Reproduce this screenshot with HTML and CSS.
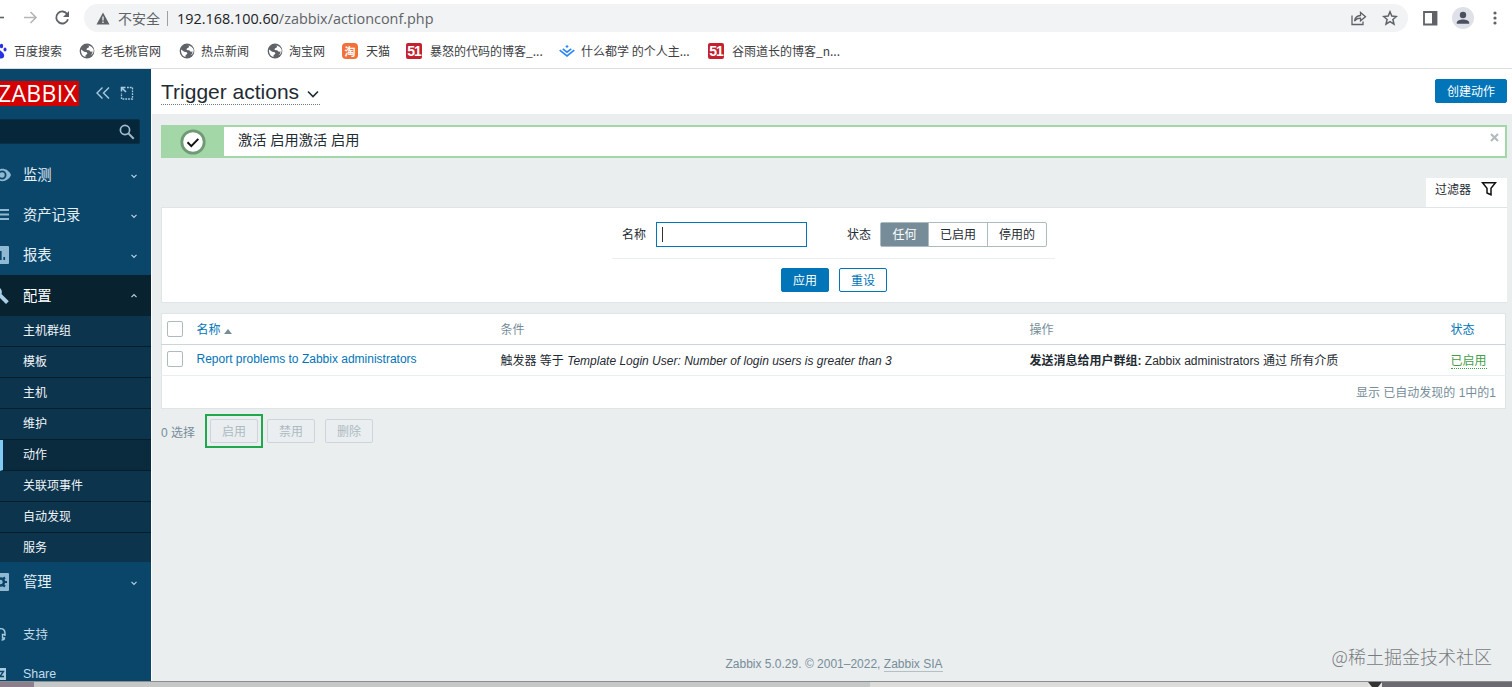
FILE: index.html
```html
<!DOCTYPE html>
<html lang="zh-CN">
<head>
  <meta charset="UTF-8">
  <title>Trigger actions</title>
  <link rel="stylesheet" href="styles.css">
</head>
<body>
  <svg class="defs" width="0" height="0">
    <symbol id="globe" viewBox="0 0 16 16">
      <circle cx="8" cy="8" r="7.4" fill="#5f6368"/>
      <path d="M2 6.500l3.200 2.300 2.600.4.6 1.600-1.800 1.400-.2 1.800C4 13.400 2 11 2 8zM8 2.200l1.800.3 .2 1.700-2.200 1.300-.2 1.500 2.600.2 1.500 1.600 1.900-.2c-.2 1.500-.9 2.900-2 3.800 2-1 3.300-3 3.100-5.500C14 4.600 11.500 2.200 8 2.200z" fill="#fff"/>
    </symbol>
    <symbol id="down" viewBox="0 0 8 8">
      <path d="M1.500 2.800L4 5.300l2.500-2.500" fill="none" stroke="#b5d3e6" stroke-width="1.200"/>
    </symbol>
  </svg>

  <div class="toolbar">
    <svg class="nav" width="76" height="36" viewBox="0 0 76 36" fill="none" stroke-width="1.600">
      <path d="M0 17.500h4" stroke="#5f6368"/>
      <path d="M24 17.500h11.500M30.500 12l5.500 5.500-5.500 5.500" stroke="#b4b6b9"/>
      <path d="M67.300 14.200a6 6 0 1 0 .7 5" stroke="#5f6368" stroke-width="1.800"/>
      <path d="M69 11v6h-6z" fill="#5f6368"/>
    </svg>
    <div class="address">
      <svg width="14" height="13" viewBox="0 0 14 13"><path d="M7 .5L13.500 12.500H.5z" fill="#5f6368"/><path d="M7 4.500v4M7 9.600v1.500" stroke="#f1f3f4" stroke-width="1.300"/></svg>
      <span class="unsafe">不安全</span>
      <span class="bar"></span>
      <span class="url">192.168.100.60<span>/zabbix/actionconf.php</span></span>
      <svg class="share" width="17" height="16" viewBox="0 0 17 16" fill="none" stroke="#5f6368" stroke-width="1.300"><path d="M2 5.500v9h11v-3M4.500 11c.5-3.500 2.500-5.200 6-5.500V2.500l5 4.200-5 4.100V8.200c-2.700 0-4.500.8-6 2.800z"/></svg>
      <svg class="star" width="16" height="16" viewBox="0 0 16 16" fill="none" stroke="#5f6368" stroke-width="1.500"><path d="M8 1.800l1.800 4.300 4.600.4-3.500 3 1.100 4.600L8 11.600l-4 2.500 1.100-4.600-3.500-3 4.600-.4z"/></svg>
    </div>
    <svg class="panel" width="15" height="15" viewBox="0 0 15 15"><path d="M1 1h12.500v12.500H1z" fill="none" stroke="#5f6368" stroke-width="1.800"/><path d="M9 1h5v13H9z" fill="#5f6368"/></svg>
    <svg class="user" width="22" height="22" viewBox="0 0 22 22"><circle cx="11" cy="11" r="11" fill="#dfe1e8"/><circle cx="11" cy="8" r="3.200" fill="#4a5060"/><path d="M4.800 16.800v-1.300c0-2 3.500-3.100 6.200-3.100s6.200 1.100 6.200 3.100v1.300z" fill="#4a5060"/></svg>
    <svg class="dots" width="4" height="14" viewBox="0 0 4 14" fill="#5f6368"><circle cx="2" cy="2" r="1.600"/><circle cx="2" cy="7" r="1.600"/><circle cx="2" cy="12" r="1.600"/></svg>
  </div>

  <div class="bookmarks">
    <div class="bookmark"><svg width="16" height="16" viewBox="0 0 16 16" fill="#2932e1"><ellipse cx="9.500" cy="3" rx="1.700" ry="2.200"/><ellipse cx="13" cy="6.500" rx="1.500" ry="2"/><path d="M5 8c1.500-2 3.500-1 5 1 3.500 2.500 2.500 6.500-.7 6.500H4c-3 0-3-4 1-7.500z"/></svg>百度搜索</div>
    <div class="bookmark"><svg width="16" height="16"><use href="#globe"/></svg>老毛桃官网</div>
    <div class="bookmark"><svg width="16" height="16"><use href="#globe"/></svg>热点新闻</div>
    <div class="bookmark"><svg width="16" height="16"><use href="#globe"/></svg>淘宝网</div>
    <div class="bookmark"><span class="ico tao">淘</span>天猫</div>
    <div class="bookmark"><span class="ico b51">51</span>暴怒的代码的博客_...</div>
    <div class="bookmark"><svg width="16" height="16" viewBox="0 0 16 16" fill="none" stroke="#2e86f5" stroke-width="1.700"><path d="M.7 7.200L8 13l7.300-5.800M3.800 5.900L8 9.200l4.200-3.300"/><path d="M6.300 3.600L8 2l1.700 1.600L8 5z" fill="#2e86f5" stroke="none"/></svg>什么都学 的个人主...</div>
    <div class="bookmark"><span class="ico b51">51</span>谷雨道长的博客_n...</div>
  </div>

  <div class="app">
    <aside class="sidebar">
      <div class="brand">
        <span class="logo">ZABBIX</span>
        <svg width="16" height="14" viewBox="0 0 16 14" fill="none" stroke="#a9cbe0" stroke-width="1.400"><path d="M7.500 1.500L2 7l5.500 5.500M14 1.500L8.500 7l5.500 5.500"/></svg>
        <svg width="14" height="14" viewBox="0 0 14 14" fill="none" stroke="#a9cbe0" stroke-width="1.300"><path d="M7 1.500h5.500v11.500H1.500V7" stroke-dasharray="1.800 1"/><path d="M1.500 5.500v-4h4M1.500 1.500L6 6" stroke-width="1.600"/></svg>
      </div>
      <div class="search">
        <svg width="16" height="16" viewBox="0 0 16 16" fill="none" stroke="#a3bccb" stroke-width="1.700"><circle cx="6" cy="6" r="4.600"/><path d="M9.400 9.400l5.300 5.300" stroke-width="2"/></svg>
      </div>

      <div class="menu">
        <div class="item"><svg class="mi" width="12" height="18" viewBox="0 0 12 18"><path d="M-6 9C-3 .8 7.500.8 11 9 7.500 17.200-3 17.200-6 9z" fill="#8fb9d3"/><circle cx="2" cy="9" r="4.500" fill="#0a466a"/><circle cx="2" cy="9" r="2.700" fill="#8fb9d3"/></svg><span>监测</span><svg class="arr" width="8" height="8"><use href="#down"/></svg></div>
        <div class="item"><svg class="mi" width="12" height="18" viewBox="0 0 12 18"><path d="M0 4h9M0 8.500h9M0 13h9" stroke="#8fb9d3" stroke-width="2"/></svg><span>资产记录</span><svg class="arr" width="8" height="8"><use href="#down"/></svg></div>
        <div class="item"><svg class="mi" width="12" height="18" viewBox="0 0 12 18"><path d="M0 0h8q1 0 1 1v16q0 1-1 1H0z" fill="#8fb9d3"/><path d="M.8 5v9M4.200 11v3" stroke="#0a466a" stroke-width="1.700"/></svg><span>报表</span><svg class="arr" width="8" height="8"><use href="#down"/></svg></div>
        <div class="item open"><svg class="mi" width="12" height="18" viewBox="0 0 12 18"><path d="M0 1c2 2 2.300 4 1.500 6l7.300 7.200-2.800 2.800L0 11z" fill="#a9cfe6"/></svg><span>配置</span><svg class="arr up" width="8" height="8"><use href="#down"/></svg></div>
      </div>
      <ul class="submenu">
        <li>主机群组</li>
        <li>模板</li>
        <li>主机</li>
        <li>维护</li>
        <li class="active">动作</li>
        <li>关联项事件</li>
        <li>自动发现</li>
        <li>服务</li>
      </ul>
      <div class="menu">
        <div class="item"><svg class="mi" width="12" height="18" viewBox="0 0 12 18"><path d="M0 0h8q1 0 1 1v16q0 1-1 1H0z" fill="#8fb9d3"/><g stroke="#0a466a" fill="none"><circle cx="0.500" cy="9" r="3.500" stroke-width="2.600"/><path d="M3 6l2-1.500M4 9h3M3 12l2 1.500" stroke-width="2.200"/></g></svg><span>管理</span><svg class="arr" width="8" height="8"><use href="#down"/></svg></div>
      </div>
      <div class="support">
        <div class="item"><svg class="mi" width="12" height="14" viewBox="0 0 12 14" fill="none" stroke="#a9cbe0" stroke-width="1.400"><path d="M0 1.700c3-.5 5 1.500 5 4.300v3M5 7.500H2.500V11H4.500c0 1.500-1 2-3 2"/></svg><span>支持</span></div>
        <div class="item"><svg class="mi" width="12" height="14" viewBox="0 0 12 14"><path d="M0 1h6v12H0z" fill="#a9cbe0"/><path d="M0 4.500h3.500L0 9.500h4" fill="none" stroke="#0a466a" stroke-width="1.400"/></svg><span>Share</span></div>
      </div>
    </aside>

    <main>
      <header>
        <h1>Trigger actions<svg width="12" height="8" viewBox="0 0 12 8"><path d="M1 1.500l5 5 5-5" fill="none" stroke="#1f2c33" stroke-width="1.600"/></svg></h1>
        <button class="btn primary create">创建动作</button>
      </header>

      <div class="message">
        <div class="msg-icon"><svg width="26" height="26" viewBox="0 0 26 26"><circle cx="13" cy="13" r="11.200" fill="#fff" stroke="#709a76" stroke-width="2.800"/><path d="M7.500 13.300l3.800 3.800 7-7.200" fill="none" stroke="#111" stroke-width="2"/></svg></div>
        <span>激活 启用激活 启用</span>
        <svg class="close" width="9" height="9" viewBox="0 0 9 9"><path d="M1 1l7 7M8 1L1 8" stroke="#b4bbbe" stroke-width="2.200"/></svg>
      </div>

      <div class="filter-tab">过滤器<svg width="16" height="16" viewBox="0 0 16 16"><path d="M1.500 1.700h13L10 7.300v6.500l-4-1.800V7.300z" fill="none" stroke="#111" stroke-width="1.500"/></svg></div>
      <div class="filter">
        <div class="fields">
          <label>名称</label>
          <div class="input"><i></i></div>
          <label class="state">状态</label>
          <div class="radios"><span class="on">任何</span><span>已启用</span><span>停用的</span></div>
        </div>
        <div class="buttons">
          <button class="btn primary">应用</button>
          <button class="btn">重设</button>
        </div>
      </div>

      <table>
        <colgroup><col class="c1"><col class="c2"><col class="c3"><col class="c4"><col></colgroup>
        <tr class="head">
          <th><span class="check"></span></th>
          <th><a>名称</a><i class="sort"></i></th>
          <th>条件</th>
          <th>操作</th>
          <th><a>状态</a></th>
        </tr>
        <tr class="row">
          <td><span class="check"></span></td>
          <td><a class="name">Report problems to Zabbix administrators</a></td>
          <td>触发器 等于 <em>Template Login User: Number of login users is greater than 3</em></td>
          <td><b>发送消息给用户群组:</b> Zabbix administrators 通过 所有介质</td>
          <td><a class="enabled">已启用</a></td>
        </tr>
        <tr class="total">
          <td colspan="5">显示 已自动发现的 1中的1</td>
        </tr>
      </table>

      <div class="actions">
        <span>0 选择</span>
        <div class="marked"><button class="btn" disabled>启用</button></div>
        <button class="btn" disabled>禁用</button>
        <button class="btn" disabled>删除</button>
      </div>

      <footer>Zabbix 5.0.29. © 2001–2022, <a>Zabbix SIA</a></footer>
      <div class="watermark">@稀土掘金技术社区</div>
    </main>
  </div>
  <div class="desktop"><i class="d1"></i><i class="d2"></i><i class="d3"></i><i class="d4"></i><i class="d5"></i></div>
</body>
</html>
```
FILE: styles.css
```css
* {
  box-sizing: border-box;
}

body {
  margin: 0;
  width: 1512px;
  height: 687px;
  overflow: hidden;
  background: #fff;
  font-family: "Liberation Sans", "Noto Sans CJK SC", sans-serif;
  font-size: 12px;
  color: #1f2c33;
}

svg {
  display: block;
  flex: none;
}

.defs {
  position: absolute;
}

/* browser */
.toolbar {
  display: flex;
  align-items: center;
  height: 36px;
}

.address {
  display: flex;
  align-items: center;
  width: 1324px;
  height: 28px;
  margin-left: 8px;
  padding: 0 10px 0 12px;
  border-radius: 14px;
  background: #f1f3f4;
  font-family: "Open Sans", "Noto Sans CJK SC", sans-serif;
  font-size: 14.400px;
  color: #5f6368;
  white-space: nowrap;
}

.unsafe {
  margin-left: 8px;
  width: 44px;
  font-size: 14px;
}

.bar {
  width: 1px;
  height: 15px;
  margin: 0 9px 0 5px;
  background: #9aa0a6;
}

.url {
  color: #202124;
}

.url span {
  color: #5f6368;
}

.share {
  margin-left: auto;
}

.star {
  margin-left: 15px;
}

.panel {
  margin-left: 15px;
}

.user {
  margin-left: 14px;
}

.dots {
  margin-left: 19px;
}

.bookmarks {
  display: grid;
  grid-template-columns: 87px 100px 88px 75px 64px 153px 149px 150px;
  align-items: center;
  height: 32px;
  margin-left: -8px;
  padding-bottom: 3px;
  font-family: "Noto Sans CJK SC", sans-serif;
  color: #3c4043;
}

.bookmark {
  display: flex;
  align-items: center;
  gap: 6px;
  white-space: nowrap;
}

.ico {
  width: 16px;
  height: 16px;
  margin-right: 2px;
  border-radius: 2px;
  text-align: center;
  line-height: 16px;
  color: #fff;
}

.tao {
  border-radius: 4px;
  background: #f2713a;
  font-size: 11px;
  font-weight: bold;
}

.b51 {
  background: #c4202f;
  font-family: "Liberation Sans", sans-serif;
  font-weight: bold;
  font-size: 14px;
  letter-spacing: -1px;
}

.app {
  display: flex;
  height: 613px;
  border-top: 1px solid #dadce0;
}

/* sidebar */
.sidebar {
  width: 151px;
  flex: none;
  background: #0a466a;
  overflow: hidden;
}

.brand {
  display: flex;
  align-items: center;
  height: 50px;
  padding-bottom: 2px;
}

.logo {
  width: 79px;
  height: 25px;
  margin-right: 16px;
  padding-right: 2px;
  background: #d40000;
  color: #fff;
  font-family: "Open Sans", sans-serif;
  font-size: 23px;
  letter-spacing: 0.300px;
  line-height: 24px;
  display: flex;
  justify-content: flex-end;
}

.brand svg + svg {
  margin-left: 9px;
}

.search {
  display: flex;
  align-items: center;
  justify-content: flex-end;
  width: 140px;
  height: 25px;
  margin-bottom: 11px;
  padding-right: 4px;
  border: 1px solid #08304a;
  border-left: 0;
  border-radius: 0 2px 2px 0;
  background: #06263a;
}

.item {
  display: flex;
  align-items: center;
  height: 40px;
  color: #e4eff6;
  font-size: 14.300px;
}

.menu .item span {
  padding-bottom: 3px;
}

.mi {
  width: 12px;
  margin-right: 11px;
}

.arr {
  margin-left: auto;
  margin-right: 13px;
  margin-top: 1px;
}

.up {
  transform: rotate(180deg);
}

.open {
  height: 41px;
  background: #08222f;
  color: #fff;
}

.submenu {
  margin: 0;
  padding: 0;
  list-style: none;
  background: #0d344d;
}

.submenu li {
  height: 31px;
  padding-left: 23px;
  line-height: 30px;
  color: #f0f5f8;
  border-bottom: 1px solid #051e2e;
}

.submenu .active {
  padding-left: 20px;
  border-left: 3px solid #7fcbf5;
  background: #0a2a3d;
}

.submenu li:last-child {
  height: 29px;
  border-bottom: 0;
}

.support {
  margin-top: 12px;
}

.support .item {
  font-size: 12.400px;
  color: #c3dae8;
}

/* content */
main {
  position: relative;
  flex: 1;
  padding-right: 5px;
  background: #ebeeef;
  border-left: 1px solid #fff;
}

main > * {
  margin-left: 9px;
}

header {
  display: flex;
  justify-content: space-between;
  height: 45px;
  margin: 0 -5px 0 0;
  padding: 0 5px 0 9px;
  background: #fff;
}

h1 {
  display: flex;
  align-items: center;
  height: 25px;
  margin: 11px 0 0;
  border-bottom: 1px dotted #6d7f88;
  font-size: 21px;
  font-weight: normal;
}

h1 svg {
  margin: 4px 1px 0 8px;
}

.btn {
  width: 48px;
  height: 24px;
  padding: 2px 0 0;
  border: 1px solid #0275b8;
  border-radius: 2px;
  background: #fff;
  color: #0275b8;
  font: inherit;
  line-height: 20px;
}

.primary {
  background: #0275b8;
  color: #fff;
}

.create {
  width: 72px;
  margin-top: 10px;
}

.message {
  display: flex;
  height: 33px;
  margin-top: 11px;
  border: 2px solid #a3d7a7;
  background: #fff;
  font-size: 14.200px;
  line-height: 27px;
}

.msg-icon {
  display: flex;
  align-items: center;
  justify-content: center;
  width: 61px;
  margin-right: 14px;
  padding-right: 1px;
  background: #a3d7a7;
}

.close {
  margin: 6px 6px 0 auto;
}

.filter-tab {
  display: flex;
  align-items: center;
  justify-content: space-between;
  width: 81px;
  height: 29px;
  margin: 20px 0 0 auto;
  padding: 0 10px 8px 9px;
  background: #fff;
}

.filter {
  height: 96px;
  border: 1px solid #dfe4e7;
  border-right: 0;
  padding: 14px 450px 0;
  background: #fff;
}

.fields {
  display: flex;
  align-items: center;
  width: 443px;
  height: 37px;
  padding: 0 0 11px 10px;
  border-bottom: 1px solid #ebeef0;
}

.fields label {
  padding-bottom: 2px;
}

.input {
  width: 151px;
  height: 25px;
  margin-left: 10px;
  padding: 4px 5px;
  border: 1px solid #0275b8;
}

.input i {
  display: block;
  width: 1px;
  height: 15px;
  background: #333;
}

.state {
  margin-left: 40px;
}

.radios {
  display: flex;
  height: 25px;
  margin-left: 9px;
  border: 1px solid #acbbc2;
  border-radius: 2px;
  line-height: 24px;
}

.radios span {
  width: 59px;
  text-align: center;
  border-left: 1px solid #acbbc2;
}

.radios .on {
  width: 47px;
  border-left: 0;
  background: #768d99;
  color: #fff;
}

.buttons {
  display: flex;
  gap: 10px;
  padding: 9px 0 0 169px;
}

table {
  width: 1345px;
  margin-top: 10px;
  table-layout: fixed;
  border-collapse: collapse;
  border: 1px solid #dfe4e7;
  background: #fff;
}

.c1 {
  width: 35px;
}

.c2 {
  width: 304px;
}

.c3 {
  width: 529px;
}

.c4 {
  width: 421px;
}

th,
td {
  padding: 0 0 1px;
  text-align: left;
  font-weight: normal;
  white-space: nowrap;
}

th {
  color: #768d99;
}

a {
  color: #0275b8;
}

.head {
  height: 31px;
  border-bottom: 1px solid #ccd5d9;
}

.row {
  height: 31px;
  border-bottom: 1px solid #ebeef0;
}

.row td {
  padding-bottom: 2px;
}

.total {
  height: 33px;
  color: #768d99;
}

.total td {
  padding-right: 9px;
  text-align: right;
}

.check {
  display: block;
  width: 16px;
  height: 16px;
  margin-left: 5px;
  border: 1px solid #acbbc2;
  border-radius: 2px;
  background: #fff;
}

.sort {
  display: inline-block;
  margin-left: 3px;
  border: 4px solid transparent;
  border-top: 0;
  border-bottom: 5px solid #768d99;
}

.enabled {
  color: #429e47;
  border-bottom: 1px dotted #429e47;
}

.actions {
  display: flex;
  align-items: center;
  height: 34px;
  margin-top: 5px;
  color: #768d99;
}

.actions > span {
  width: 44px;
}

.marked {
  padding: 3px;
  height: 34px;
  width: 58px;
  margin-right: 4px;
  border: 2px solid #22a84c;
}

.actions > .btn {
  margin-right: 10px;
}

.btn:disabled {
  border-color: #ccd5d9;
  background: #ebeef0;
  color: #acbbc2;
}

footer {
  position: absolute;
  left: 0;
  right: 5px;
  bottom: 10px;
  text-align: center;
  color: #768d99;
}

footer a {
  color: #768d99;
  border-bottom: 1px solid #b3c0c6;
}

.watermark {
  position: absolute;
  right: 20px;
  bottom: 12px;
  font-family: "Noto Sans CJK SC", sans-serif;
  font-weight: 300;
  font-size: 18px;
  color: #777b7e;
}

/* strip of the window behind */
.desktop {
  display: flex;
  height: 6px;
  border-top: 1px solid #8b8e90;
}

.d1 {
  width: 34px;
  background: #8c7f8c;
}

.d2 {
  width: 836px;
  background: #c6c8c8;
}

.d3 {
  width: 498px;
  background: #dcdddb;
}

.d4 {
  width: 14px;
  border: 4px solid #e4e4e4;
  border-top: 5px solid #333;
  border-bottom: 0;
}

.d5 {
  flex: 1;
  background: #6a6a70;
}
```
